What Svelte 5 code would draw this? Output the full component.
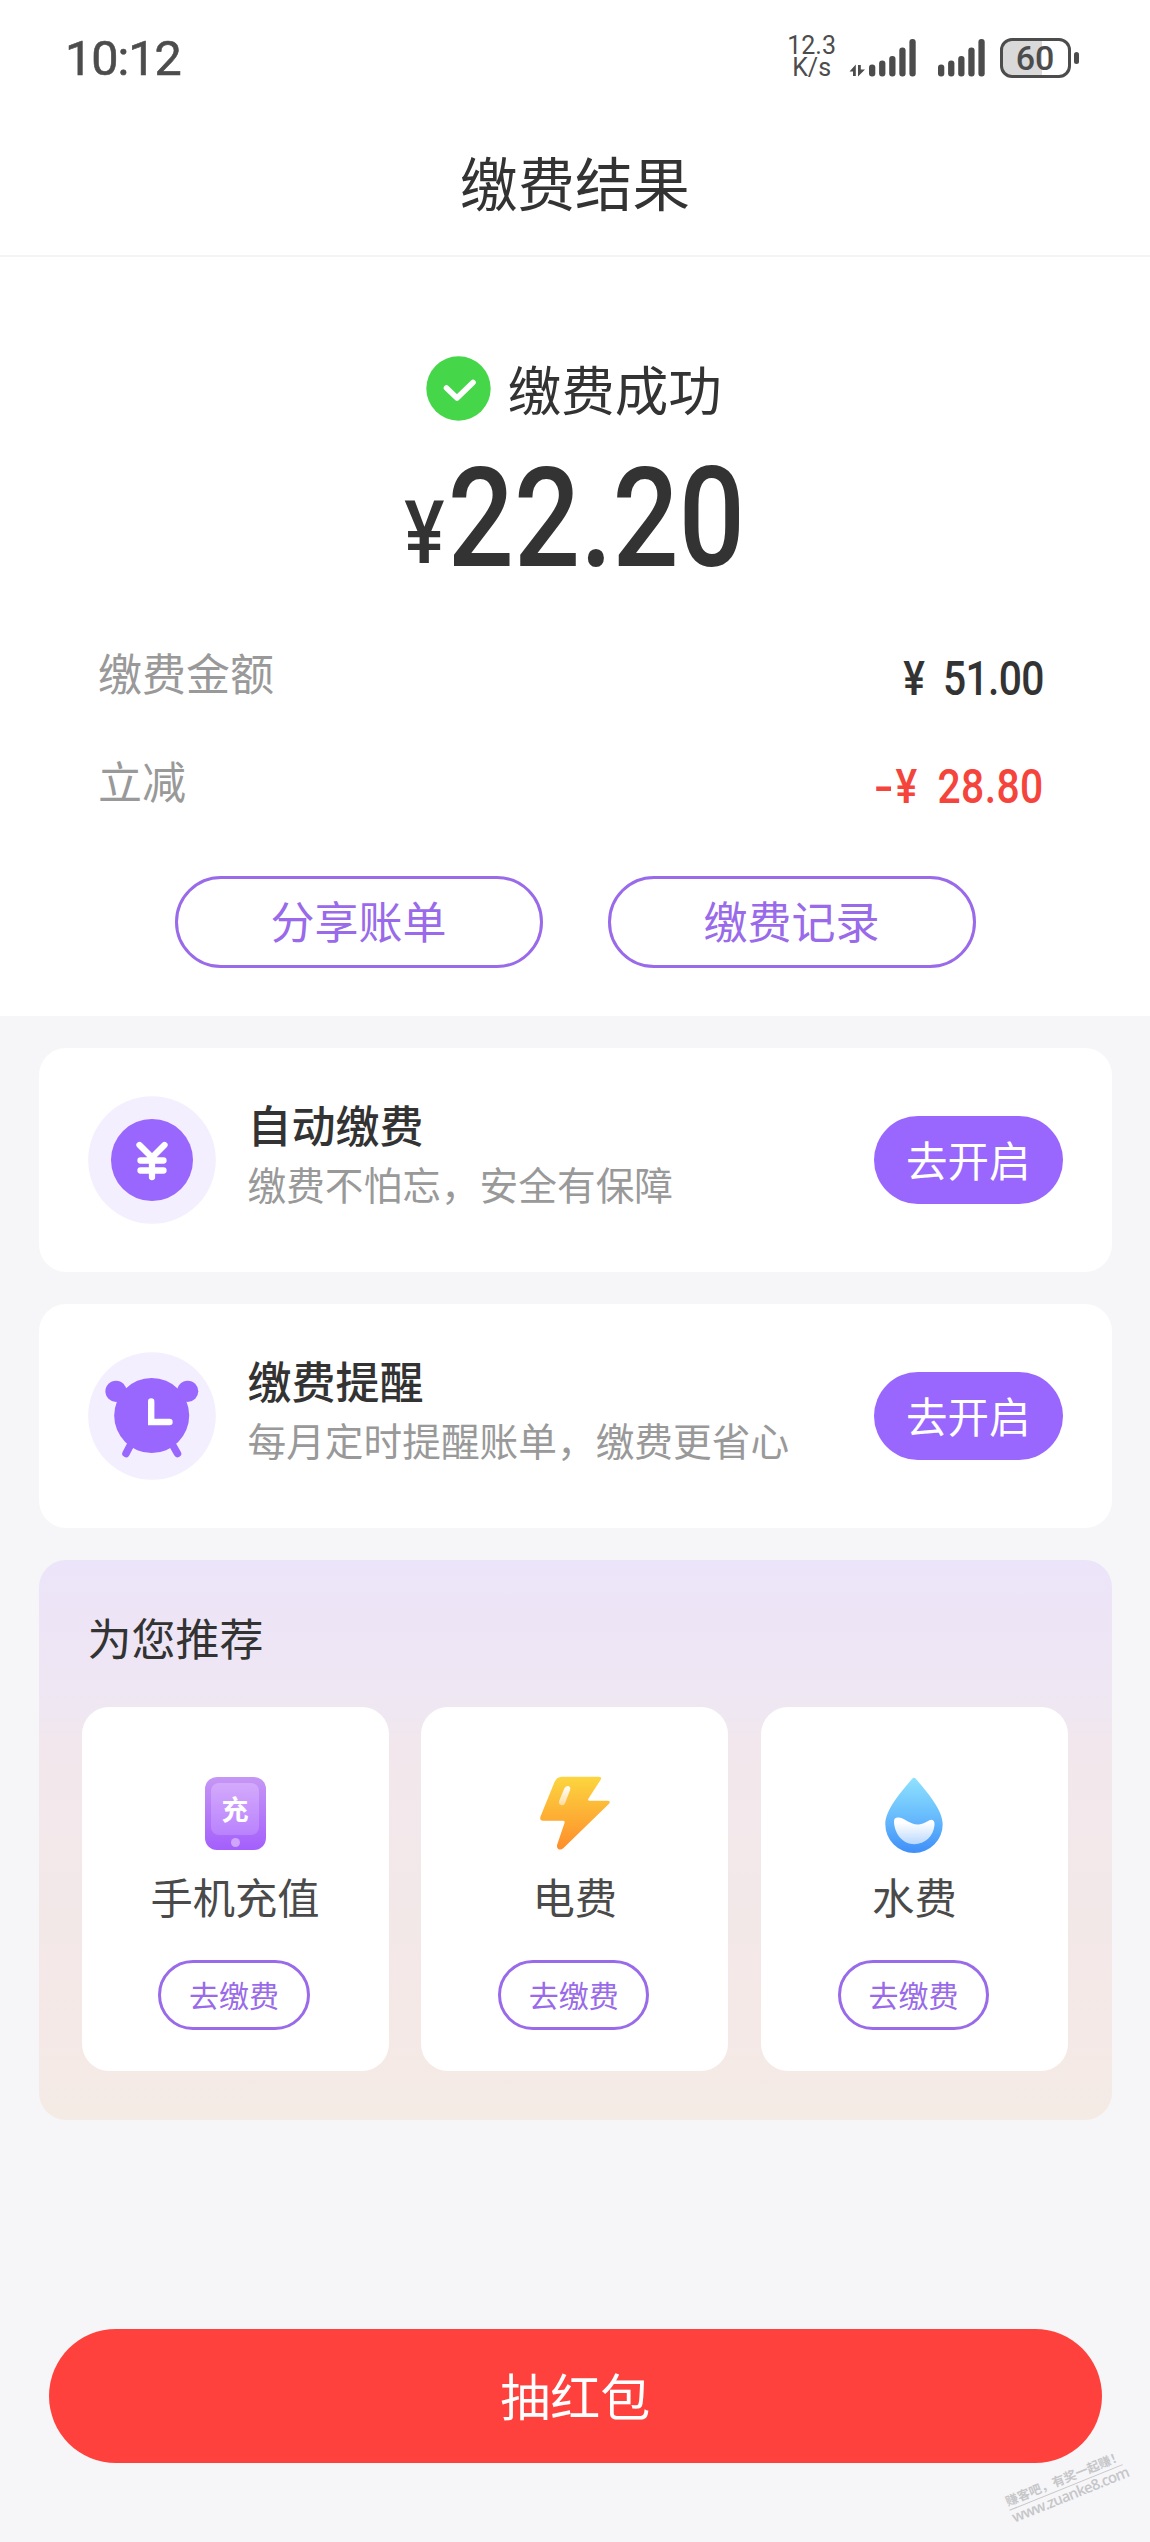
<script lang="ts">
    type Reminder = { icon: "yen" | "clock", title: string, desc: string }
    type Service = { icon: "phone" | "bolt" | "drop", name: string }

    const reminders: Reminder[] = [
        { icon: "yen", title: "自动缴费", desc: "缴费不怕忘，安全有保障" },
        { icon: "clock", title: "缴费提醒", desc: "每月定时提醒账单，缴费更省心" },
    ]

    const services: Service[] = [
        { icon: "phone", name: "手机充值" },
        { icon: "bolt", name: "电费" },
        { icon: "drop", name: "水费" },
    ]

    // height of each signal bar
    const bars = [12, 16, 20.5, 29, 37.5]
</script>

{#snippet signal()}
    <svg class="signal" width="47" height="38" viewBox="0 0 47 38">
        {#each bars as h, i}
            <rect x={i * 10.1} y={37.5 - h} width="6.3" height={h} rx="3" />
        {/each}
    </svg>
{/snippet}

<div class="page">
    <header>
        <div class="status">
            <span class="time">10:12</span>
            <div class="speed"><span>12.3</span><span>K/s</span></div>
            <svg class="arrows" width="17" height="13" viewBox="0 0 17 13">
                <path d="M6.8 0.5L0.5 7.5h3.5V12h2.8zM9 12.5V1h2.8v4.5H16z" />
            </svg>
            {@render signal()}
            <div class="sim">{@render signal()}</div>
            <div class="battery">60</div>
            <i class="nub"></i>
        </div>
        <h1>缴费结果</h1>
    </header>

    <section class="result">
        <div class="success">
            <svg width="65" height="65" viewBox="0 0 65 65">
                <circle cx="32.5" cy="32.5" r="32.2" fill="#45d64a" />
                <path d="M20.5 32l10.5 10 16-15.5" fill="none" stroke="#fff" stroke-width="5.6" stroke-linecap="round" stroke-linejoin="round" />
            </svg>
            <span>缴费成功</span>
        </div>
        <div class="amount"><span class="yen">¥</span><span class="num">22.20</span></div>
        <div class="row">
            <span>缴费金额</span>
            <b class="tight">¥ 51.00</b>
        </div>
        <div class="row">
            <span>立减</span>
            <b class="red"><span class="minus">-</span>¥ 28.80</b>
        </div>
        <div class="actions">
            <button>分享账单</button>
            <button>缴费记录</button>
        </div>
    </section>

    <main>
        {#each reminders as item}
            <div class="card">
                <svg width="128" height="128" viewBox="0 0 128 128">
                    <circle cx="64" cy="64" r="63.8" fill="#f3effe" />
                    {#if item.icon === "yen"}
                        <circle cx="64" cy="64" r="41" fill="#9966fe" />
                        <path d="M51.5 49L64 61.5l12.5-12.5M64 61v20M52.5 64.5h23M52.5 74.5h23" fill="none" stroke="#fff" stroke-width="6.3" stroke-linecap="round" stroke-linejoin="round" />
                    {:else}
                        <g fill="#9966fe">
                            <circle cx="63.7" cy="63.5" r="37.5" />
                            <circle cx="28" cy="39.3" r="10.6" />
                            <circle cx="99.7" cy="39.3" r="10.6" />
                        </g>
                        <path d="M43.5 91l-5.5 10.5M83.5 91l6 10.5" stroke="#9966fe" stroke-width="7.5" stroke-linecap="round" />
                        <path d="M63.2 49.5V70h18.3" fill="none" stroke="#fff" stroke-width="6.4" stroke-linecap="round" />
                    {/if}
                </svg>
                <div class="info">
                    <h2>{item.title}</h2>
                    <p>{item.desc}</p>
                </div>
                <button>去开启</button>
            </div>
        {/each}

        <div class="recommend">
            <h2>为您推荐</h2>
            <div class="tiles">
                {#each services as service}
                    <div class="tile">
                        {#if service.icon === "phone"}
                            <div class="phone"><span>充</span></div>
                        {:else if service.icon === "bolt"}
                            <svg width="74" height="80" viewBox="0 0 74 80">
                                <defs>
                                    <linearGradient id="bolt" x1="0" y1="0" x2="0" y2="1">
                                        <stop offset="0" stop-color="#fcd53f" />
                                        <stop offset="1" stop-color="#fe8e2c" />
                                    </linearGradient>
                                    <linearGradient id="shine" x1="0" y1="0" x2="0" y2="1">
                                        <stop offset="0" stop-color="#fff" />
                                        <stop offset="1" stop-color="#fedd9d" />
                                    </linearGradient>
                                </defs>
                                <path d="M24 2.8H60.5Q64.5 2.8 62.5 6L50.5 24.5Q49.3 26.7 51.5 26.7H70Q73 27 71 29.8L25.5 74Q22.5 76.5 20.3 75Q18.3 73.7 19.2 70.5L26.5 49Q27.2 46.7 25 46.7H5Q1.3 46.5 2.5 42.5L16.5 8Q18.7 3 24 2.8z" fill="url(#bolt)" />
                                <path d="M26.3 14.5q1.2-2.8 4-2.5 2.7 1 1.8 4l-5 13q-1.3 2.8-4 2-2.8-1-2-4z" fill="url(#shine)" />
                            </svg>
                        {:else}
                            <svg width="60" height="80" viewBox="0 0 60 80">
                                <defs>
                                    <linearGradient id="drop" x1="0" y1="0" x2="0" y2="1">
                                        <stop offset="0" stop-color="#8fe2fd" />
                                        <stop offset=".5" stop-color="#69bdfd" />
                                        <stop offset="1" stop-color="#3f8ff8" />
                                    </linearGradient>
                                    <linearGradient id="wave" x1="0" y1="0" x2="0" y2="1">
                                        <stop offset=".2" stop-color="#fff" />
                                        <stop offset="1" stop-color="#b9d8fd" />
                                    </linearGradient>
                                </defs>
                                <path d="M28 5Q30 2.5 32 5C42 17 58.7 35 58.7 50.2a28.7 28.7 0 0 1-57.4 0C1.3 35 18 17 28 5z" fill="url(#drop)" />
                                <path d="M10 47.5Q9.8 43 15 43.5C22 44.5 27 51.5 35 50.5C41 49.5 44 46 47.5 45.7Q50.8 46 50.5 51C49.5 62 41 70.2 30.3 70.2C19 70.2 10.3 60 10 47.5z" fill="url(#wave)" />
                            </svg>
                        {/if}
                        <h3>{service.name}</h3>
                        <button>去缴费</button>
                    </div>
                {/each}
            </div>
        </div>

        <button class="draw">抽红包</button>
    </main>

    <div class="watermark">
        <span>赚客吧，有奖一起赚！</span>
        <span class="site">www.zuanke8.com</span>
    </div>
</div>

<style>
    :global(body) {
        background-color: #f6f6f8;
    }

    .page {
        position: relative;
        width: 1150px;
        height: 2542px;
        overflow: hidden;
        background-color: #f6f6f8;
        font-family: "Noto Sans CJK SC", sans-serif;
        line-height: 1;
        color: #333;
    }

    h1, h2, h3, p {
        margin: 0;
        font-weight: 400;
    }

    button {
        display: block;
        box-sizing: border-box;
        padding: 0;
        border: none;
        font: inherit;
        background: none;
        cursor: pointer;
    }

    svg {
        display: block;
        flex: none;
    }

    header {
        background-color: white;
        height: 257px;
        box-sizing: border-box;
        border-bottom: 2px solid #f4f4f4;
    }

    .status {
        display: flex;
        height: 115px;
        padding: 0 71px 0 65px;
        box-sizing: border-box;
        color: #4c4c4c;
        font-family: Roboto, sans-serif;
    }

    .time {
        margin: 35px auto 0 0;
        font-size: 48.5px;
        letter-spacing: -1px;
        -webkit-text-stroke: 0.6px #4c4c4c;
    }

    .speed {
        display: flex;
        flex-direction: column;
        align-items: center;
        margin-top: 35px;
        font-size: 25px;
        line-height: 21.5px;
    }

    .arrows {
        margin: 64px 3px 0 13px;
        fill: #4c4c4c;
    }

    .signal {
        margin-top: 39px;
        fill: #4c4c4c;
    }

    .sim {
        margin-left: 22px;
    }

    .battery {
        margin: 38px 3.5px 0 14.5px;
        width: 71px;
        height: 40px;
        box-sizing: border-box;
        border: 3px solid #4c4c4c;
        border-radius: 12px;
        background: linear-gradient(90deg, #d9d9d9 60%, white 60%);
        font-size: 34px;
        font-weight: 500;
        line-height: 35px;
        text-align: center;
    }

    .nub {
        margin-top: 51.5px;
        width: 5px;
        height: 12px;
        border-radius: 3px;
        background-color: #4c4c4c;
    }

    h1 {
        padding-top: 37.5px;
        font-size: 57.5px;
        text-align: center;
    }

    .result {
        background-color: white;
        padding: 99px 98px 48px;
    }

    .success {
        display: flex;
        justify-content: center;
        align-items: center;
        gap: 16.5px;
        margin-right: 2px;
        font-size: 53.5px;
    }

    .success span {
        padding-bottom: 2px;
    }

    .amount {
        display: flex;
        justify-content: center;
        align-items: baseline;
        height: 139px;
        margin-top: 27.5px;
        font-family: Roboto, sans-serif;
        font-weight: 500;
    }

    .num {
        font-size: 139px;
        transform: scaleX(0.838);
        margin: 0 -25px 0 -28.5px;
    }

    .yen {
        font-size: 88px;
        transform: scaleX(0.86) translateY(-3px);
    }

    .row {
        display: flex;
        justify-content: space-between;
        align-items: center;
        height: 108px;
        font-size: 44px;
        color: #999;
    }

    .amount + .row {
        margin-top: 30.5px;
    }

    .row b {
        padding: 13px 10px 0 0;
        font-family: Roboto, sans-serif;
        font-size: 48px;
        font-weight: 500;
        word-spacing: 11px;
        color: #333;
        transform: scaleX(0.85);
        transform-origin: right;
    }

    .row b.tight {
        letter-spacing: -0.8px;
    }

    .row b.red {
        letter-spacing: 0.5px;
        color: #f5443c;
    }

    .minus {
        display: inline-block;
        margin-right: 5px;
        transform: scaleX(1.4);
    }

    .actions {
        display: flex;
        justify-content: center;
        gap: 65px;
        margin-top: 41.5px;
    }

    .actions button {
        width: 368px;
        height: 92.5px;
        padding-bottom: 3px;
        border: 3px solid #996ae9;
        border-radius: 47px;
        font-size: 44px;
        color: #996ae9;
    }

    main {
        display: flex;
        flex-direction: column;
        gap: 32px;
        padding: 32px 38.5px 0 39px;
    }

    .card {
        display: flex;
        align-items: center;
        height: 224px;
        box-sizing: border-box;
        padding: 0 48.5px;
        border-radius: 27px;
        background-color: white;
    }

    .info {
        flex: 1;
        margin-left: 32px;
        padding-bottom: 15px;
    }

    .info h2 {
        font-size: 44px;
        font-weight: 500;
    }

    .info p {
        margin-top: 18px;
        font-size: 38.7px;
        color: #999;
    }

    .card button {
        width: 189.5px;
        height: 88px;
        padding-bottom: 1.5px;
        border-radius: 44px;
        background-color: #9966fe;
        font-size: 41.5px;
        color: white;
    }

    .recommend {
        padding: 55px 43.5px 48.5px 42.5px;
        border-radius: 27px;
        background: linear-gradient(#ece4f9, #efe7f1 28%, #f2e7ec 33%, #f4e9e6 85%, #f5ebe5);
    }

    .recommend h2 {
        margin-left: 6px;
        font-size: 44px;
    }

    .tiles {
        display: grid;
        grid-template-columns: repeat(3, 1fr);
        gap: 32.5px;
        margin-top: 47.5px;
    }

    .tile {
        display: flex;
        flex-direction: column;
        align-items: center;
        height: 364.5px;
        box-sizing: border-box;
        padding-top: 67.5px;
        border-radius: 27px;
        background-color: white;
    }

    .phone {
        position: relative;
        width: 61px;
        height: 73px;
        box-sizing: border-box;
        margin: 2.5px 0 4.5px;
        padding: 6px 6.5px;
        border-radius: 12px;
        background: linear-gradient(#c697f5, #a45ffc);
    }

    .phone span {
        display: block;
        height: 52px;
        border-radius: 8px;
        background: linear-gradient(#d3aafb, #b982fd);
        color: white;
        font-size: 27px;
        font-weight: 700;
        line-height: 51px;
        text-align: center;
    }

    .phone::after {
        content: "";
        position: absolute;
        left: 26px;
        bottom: 3px;
        width: 9px;
        height: 9px;
        border-radius: 50%;
        background-color: #cfa5fd;
    }

    h3 {
        margin-top: 21px;
        font-size: 42.3px;
        color: #4a4a4a;
    }

    .tile button {
        width: 151.5px;
        height: 70px;
        margin: 42.5px 2px 0 0;
        padding-bottom: 1px;
        border: 3px solid #996ae9;
        border-radius: 35px;
        font-size: 30px;
        color: #996ae9;
    }

    .draw {
        height: 134px;
        margin: 177px 9.5px 0;
        padding-bottom: 4px;
        border-radius: 67px;
        background-color: #ff413d;
        font-size: 50px;
        color: white;
    }

    .watermark {
        position: absolute;
        left: 1005px;
        top: 2472px;
        width: 122px;
        display: flex;
        flex-direction: column;
        font-size: 12.5px;
        font-weight: 700;
        color: #c6c6c9;
        white-space: nowrap;
        transform: rotate(-22deg);
    }

    .site {
        margin-top: 2px;
        border-top: 1px solid #c6c6c9;
        font-family: "Open Sans", sans-serif;
        font-size: 15px;
        font-weight: 600;
        letter-spacing: -0.8px;
    }
</style>
